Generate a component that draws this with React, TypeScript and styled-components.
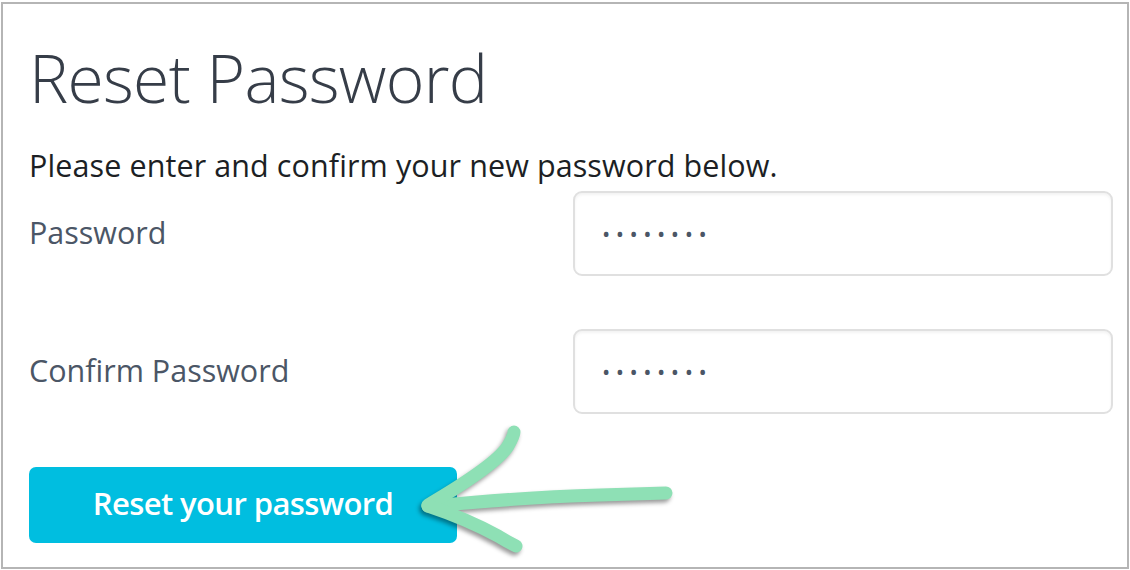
import React from "react";
import styled, { createGlobalStyle } from "styled-components";

const Global = createGlobalStyle`
  html, body { margin: 0; padding: 0; background: #ffffff; }
  body { font-family: "Open Sans", "Noto Sans", sans-serif; }
  * { box-sizing: border-box; }
`;

const Frame = styled.div`
  position: relative;
  margin: 2px 0 0 1px;
  width: 1128px;
  height: 567px;
  border: 2px solid #b5b5b5;
  padding: 40px 14px 0 26px;
  display: flex;
  flex-direction: column;
`;

const Title = styled.h1`
  margin: 0;
  font-family: "Open Sans", sans-serif;
  font-weight: 300;
  font-size: 66px;
  line-height: 66px;
  color: #363d48;
  letter-spacing: -0.7px;
`;

const Intro = styled.p`
  margin: 40px 0 0 0;
  font-family: "Open Sans", sans-serif;
  font-size: 30.5px;
  line-height: 30.5px;
  letter-spacing: 0.1px;
  color: #1c1f24;
`;

const Form = styled.form`
  margin-top: 10px;
  display: flex;
  flex-direction: column;
  gap: 53px;
`;

const Row = styled.div`
  display: grid;
  grid-template-columns: 1fr 540px;
  align-items: center;
`;

const Label = styled.label`
  font-family: "Open Sans", sans-serif;
  font-size: 30.5px;
  line-height: 30.5px;
  color: #4b5666;
  padding-bottom: 2px;
`;

const Field = styled.input`
  width: 540px;
  height: 85px;
  border: 2px solid #e0e0e0;
  border-radius: 9px;
  box-shadow: inset 0 2px 3px rgba(0, 0, 0, 0.05);
  padding: 0 0 0 27px;
  font-family: "Open Sans", sans-serif;
  font-size: 22px;
  letter-spacing: 5.5px;
  color: #4b5666;
  outline: none;
  background: #ffffff;
`;

const Button = styled.button`
  width: 428px;
  height: 76px;
  border: none;
  border-radius: 7px;
  background: #00bee0;
  color: #ffffff;
  font-family: "Open Sans", sans-serif;
  font-weight: 600;
  font-size: 31px;
  letter-spacing: -0.6px;
  padding: 0 0 4px 0;
  cursor: pointer;
`;

const Arrow = styled.svg`
  position: absolute;
  left: 397px;
  top: 411px;
  width: 290px;
  height: 150px;
  overflow: visible;
  filter: drop-shadow(-2px 3px 2px rgba(0, 0, 0, 0.4));
`;

export default function App() {
  return (
    <>
      <Global />
      <Frame>
        <Title>Reset Password</Title>
        <Intro>Please enter and confirm your new password below.</Intro>
        <Form onSubmit={(e) => e.preventDefault()}>
          <Row>
            <Label htmlFor="pw">Password</Label>
            <Field id="pw" type="password" value="12345678" readOnly />
          </Row>
          <Row>
            <Label htmlFor="pw2">Confirm Password</Label>
            <Field id="pw2" type="password" value="12345678" readOnly />
          </Row>
          <Button type="submit">Reset your password</Button>
        </Form>
        <Arrow viewBox="400 415 290 150">
          <g fill="none" stroke="#8ee0b5" strokeLinecap="round" strokeLinejoin="round">
            <path d="M428 506 C470 503 520 497 600 495 L666 493" strokeWidth="13" />
            <path d="M428 505 C462 485 498 462 508 446 C512 439 514 435 514 432" strokeWidth="13" />
            <path d="M428 506 C452 514 476 524 498 536 C506 541 512 544 516 546" strokeWidth="13" />
          </g>
        </Arrow>
      </Frame>
    </>
  );
}
